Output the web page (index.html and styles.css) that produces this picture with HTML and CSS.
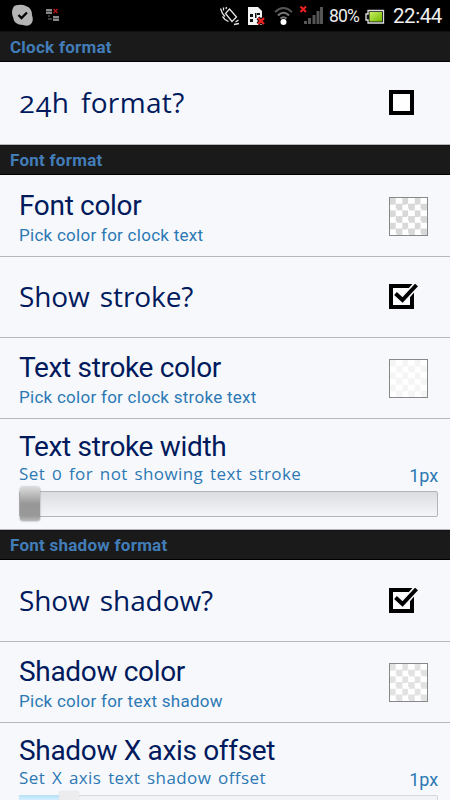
FILE: index.html
```html
<!DOCTYPE html>
<html lang="en">
<head>
<meta charset="utf-8">
<title>Clock settings</title>
<link rel="stylesheet" href="styles.css">
</head>
<body>
<svg class="defs" width="0" height="0" aria-hidden="true">
  <symbol id="checked" viewBox="0 0 32 30">
    <path d="M3 4H24V25H3Z" fill="#fff" stroke="#000" stroke-width="4"/>
    <path d="M8 11L15 18L29 2" fill="none" stroke="#f7f8fc" stroke-width="7"/>
    <path d="M7.500 11.500L14.500 18L28.500 3" fill="none" stroke="#000" stroke-width="4"/>
  </symbol>
</svg>
<main class="screen">
  <div class="status">
    <svg class="status-left" width="70" height="31" viewBox="0 0 70 31">
      <path d="M13 8Q14 5 18 5Q22 4 26 6Q32 8 32 15Q34 21 31 24Q28 27 23 25Q14 25 13 17Q11 12 13 8Z" fill="#b4b4b4"/>
      <path d="M18.500 15L21.500 18L27 12.500" fill="none" stroke="#000" stroke-width="2.300"/>
      <path d="M46 9h6v5h-6zM53 16h6v5h-6z" fill="#888"/>
      <path d="M46 11.500h6M53 18.500h6" stroke="#333" stroke-width=".8"/>
      <path d="M48 16h2M48 19h4" stroke="#777" stroke-width="1.200"/>
      <path d="M53.500 9l4 4m0-4l-4 4" stroke="#b81414" stroke-width="1.400"/>
    </svg>
    <svg class="status-right" width="110" height="31" viewBox="216 0 110 31">
      <g fill="none" stroke="#e4e4e4" stroke-width="1.300">
        <path d="M229.500 9L236.500 17L232 21.500L225.500 13.500Z"/>
        <path d="M220.500 8.500L222.500 13.500L225 16.500M223.500 7.500L223.500 10.500M226.500 7L226 9M222.500 16.500L225 19.500L228.500 21.500M235.500 22L238.500 20M234 24.500L239 23.500"/>
      </g>
      <path d="M248 7h10l4 4v14h-14z" fill="#f4f4f4"/>
      <path d="M250 14h3v3h-3zm0 5h3v3h-3zm5-6h1.500v5H255zm2 0h3v2h-3z" fill="#111"/>
      <path d="M258 18l6 6m0-6l-6 6" stroke="#000" stroke-width="4"/>
      <path d="M258 18l6 6m0-6l-6 6" stroke="#f02020" stroke-width="2.300"/>
      <g fill="none" stroke="#555" stroke-width="2">
        <path d="M275 12Q283.500 4 292 12"/><path d="M278 15.500Q283.500 10 289 15.500" stroke="#777"/><path d="M280.500 18.500Q283.500 16 286.500 18.500" stroke="#777"/>
      </g>
      <circle cx="283.500" cy="22" r="3" fill="#fff"/>
      <path d="M304 21h3v3h-3zM308 18h3v6h-3zM312.500 15h3v9h-3zM316.500 11h3v13h-3zM320 7h3v17h-3z" fill="#555"/>
      <path d="M300.500 6.500l5.500 5.500m0-5.500l-5.500 5.500" stroke="#f02020" stroke-width="2"/>
    </svg>
    <span class="percent">80%</span>
    <svg class="battery" width="20" height="16" viewBox="0 0 20 16">
      <defs><linearGradient id="charge" x1="0" y1="0" x2="1" y2="1"><stop offset="0" stop-color="#c8f060"/><stop offset="1" stop-color="#72b800"/></linearGradient></defs>
      <path d="M3 1.500H18.500V14H3V11H1V5H3Z" fill="#111" stroke="#ddd" stroke-width="1.300"/>
      <path d="M4.500 3H17V12.500H4.500Z" fill="url(#charge)"/>
    </svg>
    <span class="time">22:44</span>
  </div>

  <h2 class="section first"><span>Clock format</span></h2>
  <div class="row toggle after-header tall">
    <span class="big hours"><span class="two">2</span><span class="low">4</span>h format?</span>
    <svg class="box" width="32" height="30" viewBox="0 0 32 30"><path d="M3 4H24V25H3Z" fill="#fff" stroke="#000" stroke-width="4"/></svg>
  </div>

  <h2 class="section"><span>Font format</span></h2>
  <div class="row color after-header">
    <div><div class="title">Font color</div><div class="sub">Pick color for clock text</div></div>
    <i class="swatch gray"></i>
  </div>
  <div class="row toggle">
    <span class="big">Show stroke?</span>
    <svg class="box" width="32" height="30"><use href="#checked"/></svg>
  </div>
  <div class="row color">
    <div><div class="title">Text stroke color</div><div class="sub">Pick color for clock stroke text</div></div>
    <i class="swatch pale"></i>
  </div>
  <div class="row range">
    <div class="title">Text stroke width</div>
    <div class="line"><span class="wide">Set <span class="zero">0</span> for not showing text stroke</span><span class="value">1px</span></div>
    <div class="track"><i class="thumb"></i></div>
  </div>

  <h2 class="section"><span>Font shadow format</span></h2>
  <div class="row toggle after-header">
    <span class="big">Show shadow?</span>
    <svg class="box" width="32" height="30"><use href="#checked"/></svg>
  </div>
  <div class="row color">
    <div><div class="title">Shadow color</div><div class="sub">Pick color for text shadow</div></div>
    <i class="swatch mid"></i>
  </div>
  <div class="row range last">
    <div class="title">Shadow X axis offset</div>
    <div class="line"><span class="wide">Set X axis text shadow offset</span><span class="value">1px</span></div>
    <div class="track second"><i class="fill"></i><i class="thumb light"></i></div>
  </div>
</main>
</body>
</html>
```
FILE: styles.css
```css
* { box-sizing: border-box; }
body { margin: 0; background: #f7f8fc; }
.defs { display: block; height: 0; }
.screen { width: 450px; height: 800px; overflow: hidden; font-family: Roboto, sans-serif; color: #001a5c; background: #f7f8fc; }
.status { height: 31px; background: #000; color: #eee; display: flex; align-items: center; }
.status-left { margin-right: 146px; flex: none; }
.status-right { flex: none; }
.percent { width: 33px; margin-left: 3px; font: 17.500px/31px Roboto, sans-serif; letter-spacing: -.8px; padding-top: 2px; }
.battery { margin: 2px 0 0 3px; flex: none; }
.time { font: 20.500px/31px Roboto, sans-serif; margin-left: 8px; padding-top: 1px; white-space: nowrap; letter-spacing: -.45px; }

.section { margin: 0; height: 30px; padding-left: 10px; background: #1a1a1a; border-top: 1px solid #111; border-bottom: 1px solid #000; color: #427db8; font: bold 17px/29px Roboto, sans-serif; letter-spacing: .25px; }
.section.first { height: 31px; line-height: 31px; }

.row { height: 81px; border-bottom: 1px solid #b5b8bc; padding-left: 19px; white-space: nowrap; }
.after-header { height: 82px; }
.tall { height: 83px; }
.toggle, .color { display: flex; justify-content: space-between; }
.toggle { align-items: center; padding-right: 30px; }
.color { padding-top: 13px; padding-right: 22px; }
.color.after-header { padding-top: 14px; }
.title { font-size: 28px; line-height: 34px; letter-spacing: -.33px; }
.sub { font-size: 17px; line-height: 20px; margin-top: 2px; color: #2c78b4; letter-spacing: .27px; }
.big { font: 28px/36px "Open Sans", sans-serif; letter-spacing: -.1px; word-spacing: 3px; padding-bottom: 2px; }
.hours { letter-spacing: .35px; word-spacing: 4px; }
.two { display: inline-block; transform: scaleY(.82); transform-origin: 50% 78%; }
.low { display: inline-block; transform: translateY(5px) scaleY(.95); }
.box { display: block; }
.swatch { display: block; width: 39px; height: 39px; margin-top: 8px; border: 1px solid #888; background-size: 12.400px 12.400px; background-color: #fff; }
.gray { background-image: conic-gradient(#fff 25%, #d8d8d8 0 50%, #fff 0 75%, #d8d8d8 0); }
.mid { background-image: conic-gradient(#fff 25%, #e2e2e2 0 50%, #fff 0 75%, #e2e2e2 0); }
.pale { background-image: conic-gradient(#fff 25%, #f5f5f5 0 50%, #fff 0 75%, #f5f5f5 0); }

.range { height: 111px; padding-top: 11px; padding-right: 12px; }
.line { display: flex; justify-content: space-between; height: 20px; color: #2c78b4; }
.wide { font: 17px/20px "Open Sans", sans-serif; letter-spacing: .4px; word-spacing: 2px; }
.zero { display: inline-block; transform: scaleY(.85); transform-origin: 50% 80%; }
.value { font-size: 18px; line-height: 24px; letter-spacing: -.1px; }
.track { position: relative; height: 26px; margin-top: 7px; border: 1px solid #b3b4b7; border-radius: 2px; background: linear-gradient(#dcdde1, #f4f5f9); }
.thumb { position: absolute; left: 0; top: -5px; width: 20px; height: 34px; border-radius: 3px; background: linear-gradient(#dadada, #979797 50%, #999 85%, #bbb); box-shadow: 0 0 2px #888; }
.last { border: 0; }
.second { border-color: #d5d7dc; background: #f2f3f7; }
.fill { position: absolute; left: -1px; top: -1px; width: 42px; height: 26px; background: linear-gradient(#b5dff6, #d5f0ff 5px); }
.thumb.light { left: 39px; background: #ececee; box-shadow: 0 0 1px #ccc; }
```
